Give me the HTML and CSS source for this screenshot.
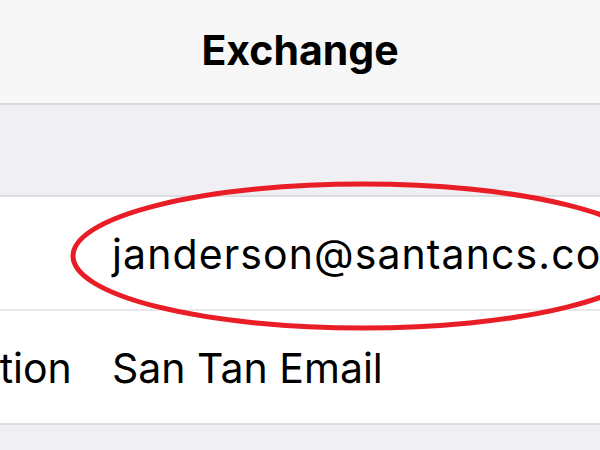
FILE: index.html
```html
<!DOCTYPE html>
<html lang="en">
  <head>
    <meta charset="UTF-8" />
    <meta name="viewport" content="width=device-width, initial-scale=1.0" />
    <title>Exchange</title>
    <link rel="stylesheet" href="styles.css">
  </head>
  <body>
    <div class="navBar">
      <h1 class="navTitle">Exchange</h1>
    </div>
    <div class="groupGap"></div>
    <div class="group">
      <div class="row">
        <span class="label">Email</span>
        <span class="value email">janderson@santancs.com</span>
      </div>
      <div class="row">
        <span class="label">Description</span>
        <span class="value">San Tan Email</span>
      </div>
    </div>
    <div class="groupGap"></div>
    <svg class="mark" width="600" height="450" viewBox="0 0 600 450">
      <ellipse cx="363" cy="256" rx="290" ry="72" fill="none" stroke="#e91d25" stroke-width="5" />
    </svg>
  </body>
</html>
```

FILE: styles.css
```css
body {
  font-family: "Inter", "Roboto", sans-serif;
  margin: 0;
  background-color: #efeff4;
  color: black;
  width: 600px;
  height: 450px;
  overflow: hidden;
  position: relative;
}
.navBar {
  height: 103px;
  background-color: #f7f7f8;
  border-bottom: 2px solid #d9d9de;
  display: flex;
  align-items: center;
  justify-content: center;
}
.navTitle {
  margin: 0;
  font-size: 41px;
  font-weight: 700;
  padding-bottom: 4px;
}
.groupGap {
  height: 90px;
}
.group {
  background-color: white;
  border-top: 2px solid #dcdce1;
  border-bottom: 2px solid #dcdce1;
}
.row {
  height: 112px;
  display: flex;
  align-items: center;
  white-space: nowrap;
  font-size: 41px;
  padding-top: 2px;
  box-sizing: border-box;
}
.row + .row {
  border-top: 2px solid #e8e8ea;
  height: 114px;
}
.label {
  flex-shrink: 0;
  width: 262px;
  margin-left: -150px;
}
.value {
  flex-shrink: 0;
}
.email {
  letter-spacing: 1.1px;
}
.mark {
  position: absolute;
  left: 0;
  top: 0;
}
```
